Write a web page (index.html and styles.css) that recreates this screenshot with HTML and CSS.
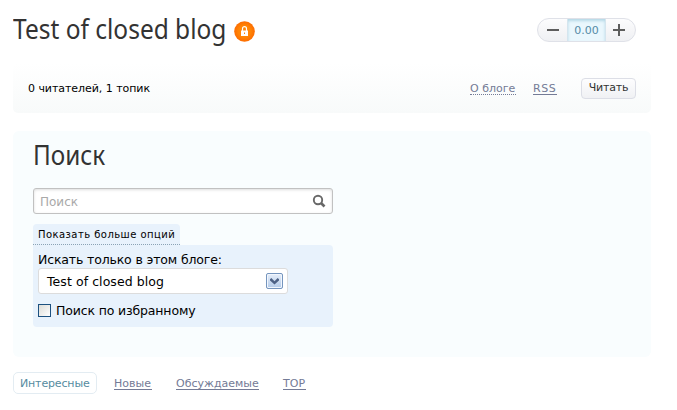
FILE: index.html
```html
<!DOCTYPE html>
<html lang="ru">
<head>
<meta charset="utf-8">
<title>Test of closed blog</title>
<link rel="stylesheet" href="styles.css">
</head>
<body>
<main class="page">
  <header class="blog-header">
    <h1 class="blog-title"><span class="blog-name">Test of closed blog</span></h1>
    <svg class="lock" width="21" height="21" viewBox="0 0 21 21">
      <defs><radialGradient id="lock-fill"><stop offset=".55" stop-color="#ff8606"/><stop offset="1" stop-color="#fd6c00"/></radialGradient></defs>
      <circle cx="10.5" cy="10.5" r="10.3" fill="url(#lock-fill)"/>
      <path d="M8.5 10V7.7a2 2 0 0 1 4 0V10" fill="none" stroke="#fff" stroke-width="1.2"/>
      <path d="M7 9.5h7V15H7z" fill="#fff"/>
      <path d="M10 11.5h1v1.6h-1z" fill="#ff8606"/>
    </svg>
    <div class="vote">
      <button class="vote-btn vote-down"><svg width="12" height="12"><path d="M0 5h12v2H0z" fill="#5d5d5d"/></svg></button>
      <span class="vote-count">0.00</span>
      <button class="vote-btn vote-up"><svg width="12" height="12"><path d="M0 5h5V0h2v5h5v2H7v5H5V7H0z" fill="#5d5d5d"/></svg></button>
    </div>
  </header>
  <section class="info">
    <span class="stats">0 читателей, 1 топик</span>
    <a class="link about">О блоге</a>
    <a class="link rss">RSS</a>
    <button class="read">Читать</button>
  </section>
  <section class="search">
    <h2 class="search-title"><span class="search-name">Поиск</span></h2>
    <div class="field">
      <span class="placeholder">Поиск</span>
      <svg width="14" height="14" viewBox="0 0 14 14" fill="none" stroke="#686868"><circle cx="6" cy="6" r="4.2" stroke-width="1.9"/><path d="M9 9l3.5 3.5" stroke-width="2.6"/></svg>
    </div>
    <div class="toggle"><span class="toggle-text">Показать больше опций</span></div>
    <div class="options">
      <div class="label">Искать только в этом блоге:</div>
      <div class="select">
        <span class="select-text">Test of closed blog</span>
        <span class="arrow"><svg width="9" height="7"><path d="M0 1.3L1.3 0 4.5 3.2 7.7 0 9 1.3V2.4L4.5 6.6 0 2.4z" fill="#4d6185"/></svg></span>
      </div>
      <div class="check"><span class="box"></span><span class="check-text">Поиск по избранному</span></div>
    </div>
  </section>
  <nav class="tabs">
    <a class="tab active">Интересные</a>
    <a class="tab t-new">Новые</a>
    <a class="tab t-disc">Обсуждаемые</a>
    <a class="tab t-top">TOP</a>
  </nav>
</main>
</body>
</html>
```
FILE: styles.css
```css
* { box-sizing: border-box; }
body { margin: 0; background: #fff; color: #000; font: 11px/14px "DejaVu Sans", sans-serif; }
svg { display: block; flex: none; }
span, a { white-space: nowrap; }
button { margin: 0; padding: 0; font: inherit; }
.page { width: 638px; margin-left: 13px; }
.blog-header { display: flex; height: 63px; }
.blog-title, .search-title { margin: 0; color: #333; font: 400 27px/36px "Noto Sans", sans-serif; }
.blog-title { width: 221px; padding-top: 11px; }
.blog-name, .search-name { display: inline-block; transform-origin: 0 50%; transform: scaleX(.907); }
.search-name { transform: scaleX(.9); }
.lock { margin-top: 21px; }
.vote { display: flex; width: 99px; height: 24px; margin: 18px 15px 0 auto; border: 1px solid #dfe1e8; border-radius: 12px; overflow: hidden; background: linear-gradient(#fcfcfd, #eff0f3); }
.vote-btn { display: flex; align-items: center; justify-content: center; border: 0; background: none; width: 29px; }
.vote-down { padding-left: 2px; }
.vote-up { padding-right: 4px; }
.vote-count { width: 40px; text-align: center; line-height: 23px; color: #558ba6; background: #eaf7fd; border-left: 1px solid #d5e5ee; border-right: 1px solid #d5e5ee; box-shadow: inset 0 2px 3px #b5d8e6; }
.info { display: flex; align-items: center; height: 50px; padding: 0 15px; border-radius: 5px; background: linear-gradient(#fff, #f8fafa); }
.stats { margin-right: auto; padding-top: 2px; letter-spacing: -.05px; }
.link { color: #747b96; height: 13px; line-height: 14px; border-bottom: 1px solid #747b96; }
.about { width: 46px; margin-right: 17px; border-bottom-style: dotted; }
.rss { width: 24px; margin-right: 24px; letter-spacing: .5px; }
.read { width: 55px; height: 21px; border: 1px solid #dcdee6; border-radius: 4px; background: linear-gradient(#fdfdfe, #f0f1f4); color: #333; letter-spacing: -.2px; }
.search { height: 226px; margin-top: 18px; padding: 6px 20px 0; border-radius: 6px; background: #f9fdfe; }
.field { display: flex; align-items: center; justify-content: space-between; width: 300px; height: 26px; margin-top: 15px; padding: 0 6px; border: 1px solid #c1c1c1; border-radius: 3px; background: #fff; box-shadow: inset 0 1px 3px #ddd; }
.placeholder { padding-top: 1px; color: #a9a9a9; font-size: 12px; }
.toggle { width: 147px; height: 21px; margin-top: 10px; padding: 4px 5px 0; background: #e8f2fc; border-radius: 4px 4px 0 0; border-bottom: 1px dotted #8ba3b5; }
.toggle-text { display: block; font-size: 10px; letter-spacing: .45px; }
.options { width: 300px; height: 82px; padding: 6px 5px 0; border-radius: 0 4px 4px 4px; background: #e8f2fc; font-size: 12.5px; letter-spacing: -.15px; }
.label { line-height: 17px; }
.select { display: flex; align-items: center; justify-content: space-between; width: 250px; height: 26px; padding: 0 4px 0 8px; border: 1px solid #dcdcdc; border-radius: 3px; background: #fff; }
.select-text { padding-top: 1px; letter-spacing: .07px; }
.arrow { display: flex; align-items: center; justify-content: center; width: 17px; height: 16px; border: 1px solid #7595be; border-radius: 2px; background: linear-gradient(#e6eefa, #b3cae8); box-shadow: inset 0 0 0 1px #f1f6fd; }
.check { display: flex; align-items: center; gap: 5px; height: 17px; margin-top: 8px; }
.box { width: 13px; height: 13px; border: 1px solid #1c5180; background: linear-gradient(135deg, #dcdcd7, #fff); }
.tabs { display: flex; height: 22px; margin-top: 15px; align-items: center; color: #747b96; }
.tab { height: 13px; line-height: 14px; border-bottom: 1px solid #747b96; }
.active { width: 84px; height: 22px; padding: 0 6px; line-height: 21px; color: #558ba0; border: 1px solid #e3ecf2; border-radius: 5px; letter-spacing: -.15px; }
.t-new { width: 38px; margin-left: 17px; }
.t-disc { width: 83px; margin-left: 24px; }
.t-top { width: 23px; margin-left: 24px; }
```
